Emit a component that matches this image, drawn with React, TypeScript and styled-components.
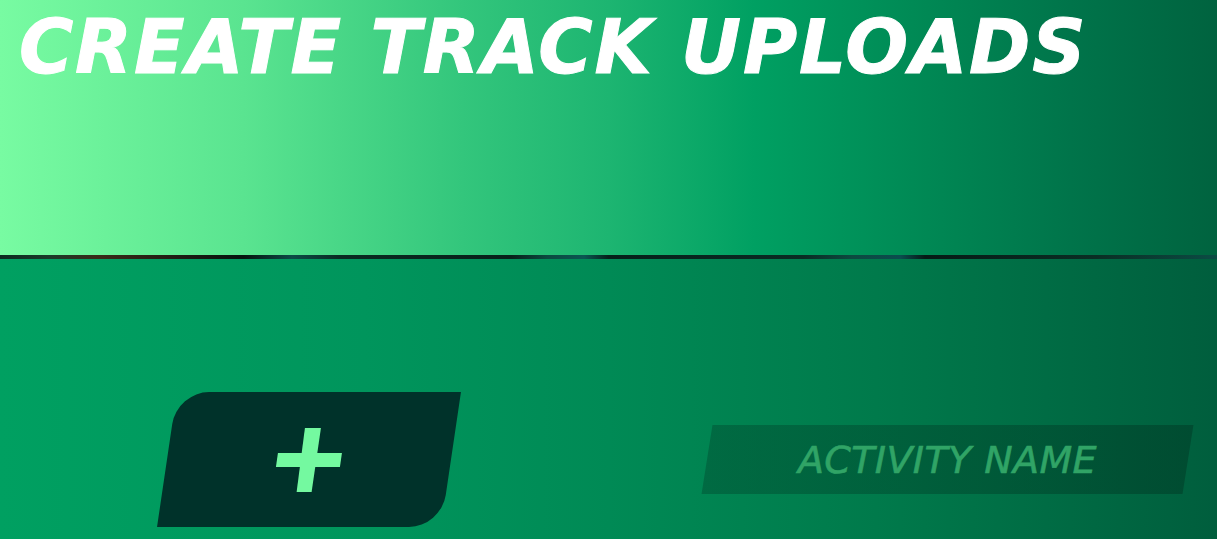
import React from "react";
import styled, { createGlobalStyle } from "styled-components";

const Global = createGlobalStyle`
  html, body { margin: 0; padding: 0; background: #005e3d; overflow: hidden; }
  * { box-sizing: border-box; }
`;

const Page = styled.div`
  width: 1217px;
  height: 539px;
  display: flex;
  flex-direction: column;
  font-family: "DejaVu Sans", Inter, sans-serif;
`;

const Header = styled.header`
  height: 255px;
  padding: 3px 0 0 19px;
  background: linear-gradient(
    90deg,
    #78fba2 0%,
    #5ae490 20%,
    #33c67c 38%,
    #1db571 50%,
    #00a062 62%,
    #008a55 75%,
    #00744a 88%,
    #00633f 100%
  );
`;

const Title = styled.h1`
  margin: 0;
  color: #ffffff;
  font-family: "DejaVu Sans", Inter, sans-serif;
  font-weight: 700;
  font-style: italic;
  font-size: 74px;
  line-height: 88px;
  letter-spacing: 1.8px;
  white-space: nowrap;
  -webkit-text-stroke: 1px #ffffff;
`;

const Strip = styled.div`
  height: 4px;
  background: linear-gradient(
    90deg,
    #0c2a20 0%,
    #1a3a2a 4%,
    #3a2a18 8%,
    #221c14 14%,
    #06140f 20%,
    #0c4a46 24%,
    #0a2a22 28%,
    #08201a 42%,
    #0b4a40 45%,
    #0b5652 48%,
    #06201a 50%,
    #0a2c24 66%,
    #0c4a40 70%,
    #0b4c4e 74%,
    #061a16 76%,
    #0a2e24 90%,
    #0b4c44 100%
  );
`;

const Body = styled.main`
  flex: 1;
  padding-top: 133px;
  background: linear-gradient(
    90deg,
    #00a061 0%,
    #00955c 30%,
    #008a55 50%,
    #007a4b 72%,
    #006a43 88%,
    #005e3d 100%
  );
`;

const Row = styled.div`
  display: flex;
  align-items: center;
  height: 135px;
  padding-left: 167px;
  gap: 256px;
`;

const AddButton = styled.button`
  width: 284px;
  height: 135px;
  border: none;
  padding: 0;
  background: #00322a;
  border-radius: 32px 0 32px 0;
  transform: skewX(-8.4deg);
  display: flex;
  align-items: center;
  justify-content: center;
  cursor: pointer;
  svg { transform: skewX(8.4deg); }
`;

const NameField = styled.div`
  width: 481px;
  height: 69px;
  background: linear-gradient(90deg, rgba(0, 40, 28, 0.28), rgba(0, 30, 20, 0.3));
  transform: skewX(-9deg);
  display: flex;
  align-items: center;
  justify-content: center;
`;

const NameText = styled.span`
  transform: skewX(9deg);
  color: #30a466;
  font-family: "DejaVu Sans", Inter, sans-serif;
  font-style: italic;
  font-weight: 400;
  font-size: 38px;
  letter-spacing: 0.4px;
  white-space: nowrap;
  -webkit-text-stroke: 0.6px #30a466;
`;

const PlusIcon = () => (
  <svg width="68" height="64" viewBox="0 0 68 64">
    <polygon points="30,0 46,0 36.7,64 21.7,64" fill="#74f9a0" />
    <polygon points="3,25 67,25 65,39 1,39" fill="#74f9a0" />
  </svg>
);

export default function App() {
  return (
    <>
      <Global />
      <Page>
        <Header>
          <Title>CREATE TRACK UPLOADS</Title>
        </Header>
        <Strip />
        <Body>
          <Row>
            <AddButton aria-label="Add track">
              <PlusIcon />
            </AddButton>
            <NameField>
              <NameText>ACTIVITY NAME</NameText>
            </NameField>
          </Row>
        </Body>
      </Page>
    </>
  );
}
